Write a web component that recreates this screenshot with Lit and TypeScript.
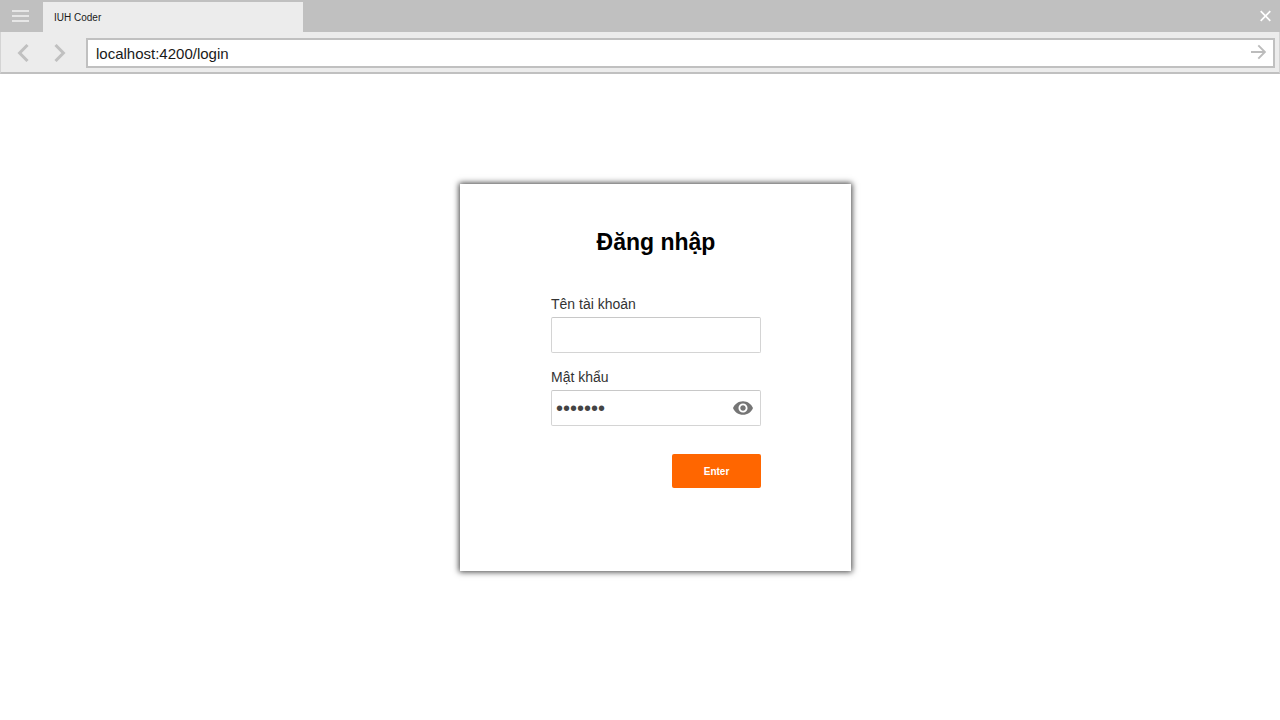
import { LitElement, html, css } from "lit";
import { customElement, state } from "lit/decorators.js";

@customElement("browser-bar")
class BrowserBar extends LitElement {
  static styles = css`
    :host {
      display: block;
      color: #1a1a1a;
    }
    button {
      display: flex;
      padding: 0;
      border: 0;
      background: none;
      font: inherit;
      cursor: pointer;
    }
    svg {
      display: block;
      fill: none;
    }
    .tabs {
      display: flex;
      align-items: center;
      height: 32px;
      background: #c0c0c0;
    }
    .menu {
      width: 43px;
      padding-left: 12px;
      box-sizing: border-box;
    }
    .tab {
      align-self: flex-end;
      width: 260px;
      height: 30px;
      box-sizing: border-box;
      padding: 0 11px;
      background: #ececec;
      font-size: 10px;
      line-height: 32px;
    }
    .close {
      margin-left: auto;
      padding-right: 9px;
    }
    .nav {
      display: flex;
      align-items: center;
      height: 42px;
      box-sizing: border-box;
      padding: 0 4px 0 16px;
      border: 1px solid #d4d4d4;
      border-top: 0;
      border-bottom: 2px solid #c0c0c0;
      background: #ececec;
    }
    .arrows {
      display: flex;
      gap: 25px;
      width: 69px;
      padding-top: 2px;
    }
    .address {
      flex: 1;
      display: flex;
      align-items: center;
      height: 30px;
      margin-top: 2px;
      box-sizing: border-box;
      border: 2px solid #c0c0c0;
      background: #fff;
      padding: 0 7px 0 8px;
    }
    .url {
      flex: 1;
      min-width: 0;
      padding: 0;
      border: 0;
      outline: 0;
      background: none;
      color: inherit;
      font: inherit;
      font-size: 15px;
    }
  `;

  render() {
    return html`
      <div class="tabs">
        <button class="menu" aria-label="Menu">
          <svg width="17" height="14" viewBox="0 0 17 14" stroke="#e6e6e6" stroke-width="2">
            <path d="M0 2h17M0 7h17M0 12h17" />
          </svg>
        </button>
        <div class="tab">IUH Coder</div>
        <button class="close" aria-label="Close">
          <svg width="11" height="12" viewBox="0 0 11 12" stroke="#fff" stroke-width="1.7">
            <path d="M.7 1.2l9.6 9.6M10.3 1.2L.7 10.8" />
          </svg>
        </button>
      </div>
      <div class="nav">
        <div class="arrows">
          <button aria-label="Back">
            <svg width="12" height="18" viewBox="0 0 12 18" stroke="#c0c0c0" stroke-width="3">
              <path d="M10.5 1L2.6 9l7.9 8" />
            </svg>
          </button>
          <button aria-label="Forward">
            <svg width="12" height="18" viewBox="0 0 12 18" stroke="#c0c0c0" stroke-width="3">
              <path d="M1.5 1l7.9 8-7.9 8" />
            </svg>
          </button>
        </div>
        <div class="address">
          <input class="url" aria-label="Address" value="localhost:4200/login" />
          <button aria-label="Go">
            <svg width="15" height="18" viewBox="0 0 15 18" stroke="#bcbcbc" stroke-width="1.9">
              <path d="M0 8h13.6M7.3 1.4L13.9 8l-6.6 6.6" />
            </svg>
          </button>
        </div>
      </div>
    `;
  }
}

@customElement("login-card")
class LoginCard extends LitElement {
  @state() private visible = false;

  static styles = css`
    :host {
      display: block;
    }
    .card {
      width: 391px;
      max-width: 100%;
      box-sizing: border-box;
      padding: 44px 90px 83px 91px;
      background: #fff;
      box-shadow: 0 0 6px 1px rgba(0, 0, 0, 0.75);
    }
    .title {
      margin: 0 0 37px;
      color: #000;
      font-size: 23px;
      line-height: 28px;
      text-align: center;
    }
    .field {
      display: flex;
      flex-direction: column;
      gap: 2px;
      margin-bottom: 13px;
    }
    .label {
      color: #333;
      font-size: 14px;
      line-height: 22px;
    }
    .box {
      display: flex;
      align-items: center;
      height: 36px;
      box-sizing: border-box;
      padding: 0 7px 0 4px;
      border: 1px solid #d4d4d4;
      border-top-color: #c8c8c8;
      border-radius: 2px;
      background: #fff;
    }
    .input {
      flex: 1;
      min-width: 0;
      padding: 0;
      border: 0;
      outline: 0;
      background: none;
      color: #444;
      font: inherit;
      font-size: 14px;
    }
    .input[type="password"] {
      font-size: 20px;
    }
    .eye {
      display: flex;
      padding: 0;
      border: 0;
      background: none;
      cursor: pointer;
    }
    .submit {
      display: block;
      width: 89px;
      height: 34px;
      margin: 28px 0 0 auto;
      padding: 0;
      border: 0;
      border-radius: 2px;
      background: #ff6600;
      color: #fff;
      font: inherit;
      font-size: 10px;
      font-weight: bold;
      cursor: pointer;
    }
  `;

  render() {
    return html`
      <form class="card" @submit=${(e: Event) => e.preventDefault()}>
        <h1 class="title">Đăng nhập</h1>
        <div class="field">
          <label class="label" for="user">Tên tài khoản</label>
          <div class="box"><input class="input" id="user" type="text" /></div>
        </div>
        <div class="field">
          <label class="label" for="pass">Mật khẩu</label>
          <div class="box">
            <input class="input" id="pass" type=${this.visible ? "text" : "password"} value="matkhau" />
            <button
              class="eye"
              type="button"
              aria-label="Show password"
              @click=${() => (this.visible = !this.visible)}
            >
              <svg width="20" height="14" viewBox="1 4.5 22 15" fill="#757575">
                <path
                  d="M12 4.5C7 4.5 2.73 7.61 1 12c1.73 4.39 6 7.5 11 7.5s9.27-3.11 11-7.5c-1.73-4.39-6-7.5-11-7.5zM12 17c-2.76 0-5-2.24-5-5s2.24-5 5-5 5 2.24 5 5-2.24 5-5 5zm0-8c-1.66 0-3 1.34-3 3s1.34 3 3 3 3-1.34 3-3-1.34-3-3-3z"
                />
              </svg>
            </button>
          </div>
        </div>
        <button class="submit" type="submit">Enter</button>
      </form>
    `;
  }
}

@customElement("app-root")
class AppRoot extends LitElement {
  static styles = css`
    :host {
      display: block;
      min-height: 100vh;
      background: #fff;
      font-family: "Liberation Sans", Arial, sans-serif;
    }
    .page {
      display: flex;
      justify-content: center;
      padding: 110px 0 32px 31px;
    }
  `;

  render() {
    return html`
      <browser-bar></browser-bar>
      <main class="page"><login-card></login-card></main>
    `;
  }
}
